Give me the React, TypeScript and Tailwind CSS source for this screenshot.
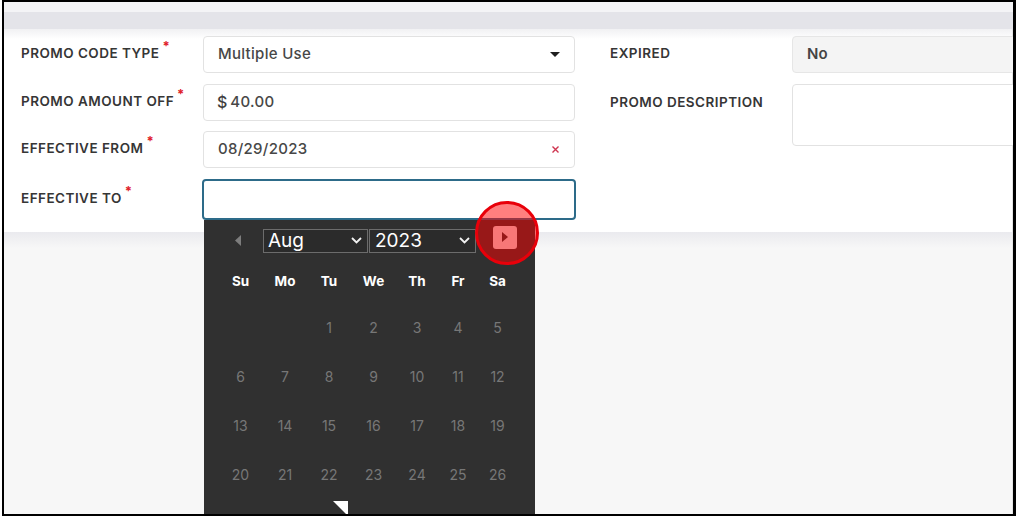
import type { ReactNode } from 'react'

const FONT = { fontFamily: 'Inter, "Noto Sans", "DejaVu Sans", sans-serif' }

const DAY_NAMES = ['Su', 'Mo', 'Tu', 'We', 'Th', 'Fr', 'Sa']

const WEEKS: (number | null)[][] = [
  [null, null, 1, 2, 3, 4, 5],
  [6, 7, 8, 9, 10, 11, 12],
  [13, 14, 15, 16, 17, 18, 19],
  [20, 21, 22, 23, 24, 25, 26],
]

const CAL_COLS = 'grid grid-cols-[45px_44px_44px_45px_42px_40px_39px]'

function FieldLabel({ children, required }: { children: ReactNode; required?: boolean }) {
  return (
    <div className="flex w-[182px] shrink-0 items-center pb-[2px]">
      <span className="text-[13.5px] font-semibold uppercase tracking-[0.035em] text-[#363636]">{children}</span>
      {required && <span className="ml-[3px] -mt-[14px] text-[13px] font-bold leading-none text-[#e0202a]">*</span>}
    </div>
  )
}

function Chevron() {
  return (
    <svg width="11" height="7" viewBox="0 0 11 7" className="shrink-0">
      <path d="M1 1 L5.5 5.5 L10 1" fill="none" stroke="#f2f2f2" strokeWidth="1.8" />
    </svg>
  )
}

function Calendar() {
  return (
    <div className="absolute left-[1px] top-[41px] z-10 h-[320px] w-[331px] bg-[#303030]">
      <div className="mt-[9px] flex h-[24px] items-center">
        <div className="flex w-[59px] justify-end pr-[21px]">
          <svg width="7" height="11" viewBox="0 0 7 11">
            <path d="M6 0 L0 5.5 L6 11 Z" fill="#7d7d7d" />
          </svg>
        </div>
        <div className="flex h-[24px] w-[105px] items-center justify-between border border-[#6c6c6c] bg-[#2b2b2b] pl-[4px] pr-[5px]">
          <span className="text-[19px] leading-none text-white">Aug</span>
          <Chevron />
        </div>
        <div className="ml-[1px] flex h-[24px] w-[107px] items-center justify-between border border-[#6c6c6c] bg-[#2b2b2b] pl-[5px] pr-[5px]">
          <span className="text-[19px] leading-none text-white">2023</span>
          <Chevron />
        </div>
        <div className="-mt-[3px] ml-[17px] flex h-[23px] w-[24px] self-start items-center justify-center rounded-[3px] bg-[#eeeeee]">
          <svg width="6" height="10" viewBox="0 0 6 10">
            <path d="M0 0 L6 5 L0 10 Z" fill="#2e2e2e" />
          </svg>
        </div>
      </div>

      <div className={`${CAL_COLS} mt-[14px] h-[30px] items-center pl-[14px]`}>
        {DAY_NAMES.map(d => (
          <div key={d} className="text-center text-[13.5px] font-bold text-white">
            {d}
          </div>
        ))}
      </div>

      <div className="mt-[6px] pl-[14px]">
        {WEEKS.map((week, i) => (
          <div key={i} className={`${CAL_COLS} h-[49px] items-center`}>
            {week.map((day, j) => (
              <div key={j} className="text-center text-[14px] text-[#777777]">
                {day ?? ''}
              </div>
            ))}
          </div>
        ))}
      </div>

      <svg width="15" height="15" viewBox="0 0 15 15" className="absolute left-[129px] top-[281px]">
        <path d="M0 0 L15 0 L15 15 Z" fill="#ffffff" />
      </svg>

      {/* highlight ring over the next-month button */}
      <div className="absolute left-[271px] top-[-19px] h-[64px] w-[64px] rounded-full border-[3px] border-[#e8000a] bg-[rgba(255,0,0,0.5)]" />
    </div>
  )
}

export default function App() {
  return (
    <div className="h-[518px] w-[1017px] overflow-hidden bg-white" style={FONT}>
      <div className="ml-[2px] h-[516px] w-[1014px] border-b-2 border-l-2 border-r-[3px] border-t-2 border-black">
        <div className="flex h-full flex-col overflow-hidden bg-[#f7f7f7]">
          <div className="h-[10px] bg-[#f4f4f6]" />
          <div className="h-[17px] bg-[#e4e4e9]" />

          <div className="relative z-10 h-[203px] border-r border-[#e4e4e4] bg-[linear-gradient(to_bottom,#f1f1f3_0px,#ffffff_10px)] pl-[17px] pt-[7px]">
            <div className="flex">
              <div className="flex w-[554px] shrink-0 flex-col gap-[10.5px]">
                <div className="flex">
                  <FieldLabel required>Promo Code Type</FieldLabel>
                  <div className="flex h-[37px] w-[372px] items-center justify-between rounded-[4px] border border-[#e2e2e2] bg-white pl-[14px] pr-[14px]">
                    <span className="text-[15px] font-medium tracking-[0.02em] text-[#474747]">Multiple Use</span>
                    <svg width="10" height="5" viewBox="0 0 10 5">
                      <path d="M0 0 L10 0 L5 5 Z" fill="#1f1f1f" />
                    </svg>
                  </div>
                </div>

                <div className="flex">
                  <FieldLabel required>Promo Amount Off</FieldLabel>
                  <div className="flex h-[37px] w-[372px] items-center rounded-[4px] border border-[#e2e2e2] bg-white pl-[13px]">
                    <span className="text-[16px] font-medium text-[#3d3d3d]">$</span>
                    <span className="ml-[3px] text-[15px] font-medium tracking-[0.02em] text-[#474747]">40.00</span>
                  </div>
                </div>

                <div className="flex">
                  <FieldLabel required>Effective From</FieldLabel>
                  <div className="flex h-[37px] w-[372px] items-center justify-between rounded-[4px] border border-[#e2e2e2] bg-white pl-[14px] pr-[15px]">
                    <span className="text-[15px] font-medium tracking-[0.02em] text-[#474747]">08/29/2023</span>
                    <svg width="7" height="7" viewBox="0 0 7 7">
                      <path d="M0.5 0.5 L6.5 6.5 M6.5 0.5 L0.5 6.5" stroke="#cf3550" strokeWidth="1.4" />
                    </svg>
                  </div>
                </div>

                <div className="flex">
                  <FieldLabel required>Effective To</FieldLabel>
                  <div className="relative">
                    <div className="-ml-[1px] h-[41px] w-[374px] rounded-[4px] border-2 border-[#2d6b89] bg-white" />
                    <Calendar />
                  </div>
                </div>
              </div>

              <div className="flex flex-1 flex-col gap-[10.5px] pl-[35px]">
                <div className="flex">
                  <div className="flex w-[182px] shrink-0 items-center pb-[2px]">
                    <span className="text-[13.5px] font-semibold uppercase tracking-[0.035em] text-[#363636]">Expired</span>
                  </div>
                  <div className="flex h-[37px] w-[260px] shrink-0 items-center rounded-[4px] border border-[#e6e6e6] bg-[#f4f4f4] pl-[14px]">
                    <span className="text-[15px] font-semibold text-[#444]">No</span>
                  </div>
                </div>

                <div className="flex">
                  <div className="flex w-[182px] shrink-0 items-start pt-[8px]">
                    <span className="text-[13.5px] font-semibold uppercase tracking-[0.035em] text-[#363636]">Promo Description</span>
                  </div>
                  <div className="h-[62px] w-[260px] shrink-0 rounded-[4px] border border-[#e2e2e2] bg-white" />
                </div>
              </div>
            </div>
          </div>

          <div className="h-[16px] border-r border-[#e4e4e4] bg-gradient-to-b from-[#eaeaee] to-[#f7f7f7]" />
          <div className="flex-1 border-r border-[#e4e4e4] bg-[#f7f7f7]" />
        </div>
      </div>
    </div>
  )
}
